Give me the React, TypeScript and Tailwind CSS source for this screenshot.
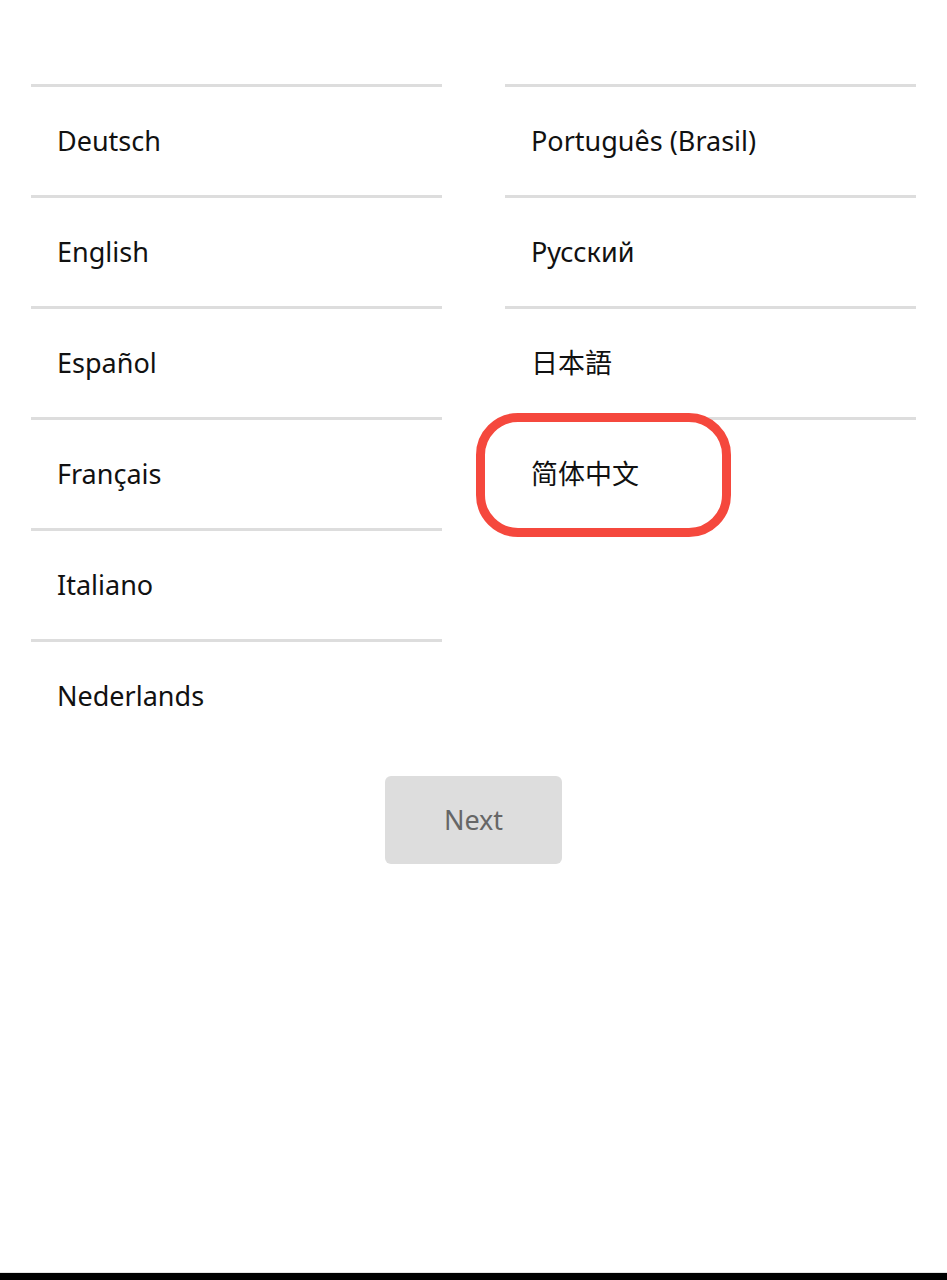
import React from "react";

const left = ["Deutsch", "English", "Español", "Français", "Italiano", "Nederlands"];
const right = ["Português (Brasil)", "Русский", "日本語", "简体中文"];

function Row({ label, highlight }: { label: string; highlight?: boolean }) {
  return (
    <div className="relative h-[111px] border-t-[3px] border-[#dddddd] flex items-center px-[26px]">
      <span className="text-[27px] text-[#111111]">{label}</span>
      {highlight && (
        <div className="absolute left-[-29px] top-[-7px] w-[255px] h-[124px] border-[9px] border-[#f5483d] rounded-[42px]" />
      )}
    </div>
  );
}

export default function App() {
  return (
    <div
      className="h-[1280px] flex flex-col bg-white"
      style={{ fontFamily: '"Noto Sans", "Noto Sans CJK SC", sans-serif' }}
    >
      <div className="flex-1 pt-[84px] px-[31px]">
        <div className="grid grid-cols-2 gap-x-[63px]">
          <div className="flex flex-col">
            {left.map((l) => (
              <Row key={l} label={l} />
            ))}
          </div>
          <div className="flex flex-col">
            {right.map((l, i) => (
              <Row key={l} label={l} highlight={i === 3} />
            ))}
          </div>
        </div>
        <div className="flex justify-center mt-[26px]">
          <button className="w-[177px] h-[88px] rounded-[6px] bg-[#dddddd] text-[27px] text-[#666666]">
            Next
          </button>
        </div>
      </div>
      <div className="h-px bg-[#e4e4e4]" />
      <div className="h-[7px] bg-black" />
    </div>
  );
}
